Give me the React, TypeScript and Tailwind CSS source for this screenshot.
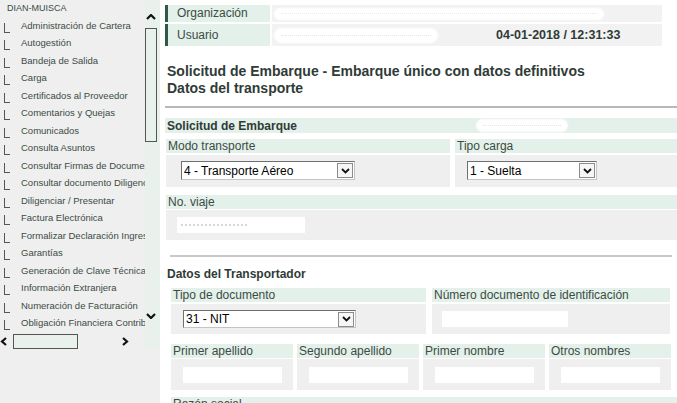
import { ReactNode } from "react";

const menu = [
  "Administración de Cartera",
  "Autogestión",
  "Bandeja de Salida",
  "Carga",
  "Certificados al Proveedor",
  "Comentarios y Quejas",
  "Comunicados",
  "Consulta Asuntos",
  "Consultar Firmas de Documentos",
  "Consultar documento Diligenciado",
  "Diligenciar / Presentar",
  "Factura Electrónica",
  "Formalizar Declaración Ingreso",
  "Garantías",
  "Generación de Clave Técnica",
  "Información Extranjera",
  "Numeración de Facturación",
  "Obligación Financiera Contribuyente",
];

function Caret({ down = false }: { down?: boolean }) {
  return (
    <svg width="10" height="6" viewBox="0 0 10 6">
      <polyline
        points={down ? "1,1 5,5 9,1" : "1,5 5,1 9,5"}
        fill="none"
        stroke="#111"
        strokeWidth="2.2"
      />
    </svg>
  );
}

function Side({ right = false }: { right?: boolean }) {
  return (
    <svg width="7" height="9" viewBox="0 0 7 9">
      <polyline
        points={right ? "1,1 5,4.5 1,8" : "6,1 2,4.5 6,8"}
        fill="none"
        stroke="#111"
        strokeWidth="2.2"
      />
    </svg>
  );
}

// blurred (hidden) value
function Blob({ className }: { className: string }) {
  return (
    <span
      className={`flex items-center rounded-full bg-white px-[6px] shadow-[0_0_2px_1px_#fff] ${className}`}
    >
      <span className="h-0 w-full border-t border-dotted border-[#e6e6e6]" />
    </span>
  );
}

function Select({ value, className }: { value: string; className: string }) {
  return (
    <div
      className={`flex items-center border border-t-[#6f6f6f] border-l-[#6f6f6f] border-r-[#c4c4c4] border-b-[#c4c4c4] bg-white ${className}`}
    >
      <span className="flex-1 pl-[2px] text-[12px] leading-none text-black">
        {value}
      </span>
      <span className="mr-[1px] flex h-[15px] w-[16px] items-center justify-center border border-[#8c8c8c] bg-[#f6f6f6]">
        <svg width="9" height="6" viewBox="0 0 9 6">
          <polyline
            points="1,1 4.5,4.5 8,1"
            fill="none"
            stroke="#111"
            strokeWidth="1.8"
          />
        </svg>
      </span>
    </div>
  );
}

function Field({
  label,
  className,
  bodyClass,
  children,
}: {
  label: string;
  className?: string;
  bodyClass: string;
  children?: ReactNode;
}) {
  return (
    <div className={`flex flex-col ${className ?? ""}`}>
      <div className="h-[14px] bg-[#e4f0ea] pl-[2px] text-[12px] leading-[14px] whitespace-nowrap text-[#3c4b44]">
        {label}
      </div>
      <div className={`bg-[#efefef] ${bodyClass}`}>{children}</div>
    </div>
  );
}

export default function App() {
  return (
    <div className="flex h-[403px] w-[677px] overflow-hidden bg-white font-['Liberation_Sans',Arial,sans-serif]">
      <aside className="flex w-[160px] shrink-0 flex-col bg-[#efefef]">
        <div className="flex h-[349px]">
          <div className="flex w-[145px] flex-col">
            <div className="h-[333px] overflow-hidden">
              <div className="flex h-[17px] items-center pl-[7px] text-[9px] text-[#3c4b44]">
                DIAN-MUISCA
              </div>
              {menu.map((item) => (
                <div key={item} className="flex h-[17.5px] items-center">
                  <span className="ml-[4px] mt-[4px] h-[10px] w-[6px] shrink-0 border-b border-l border-[#555]" />
                  <span className="ml-[11px] whitespace-nowrap text-[9.5px] text-[#3c4b44]">
                    {item}
                  </span>
                </div>
              ))}
            </div>
            <div className="flex h-[16px] items-center">
              <span className="flex w-[7px] justify-center">
                <Side />
              </span>
              <span className="ml-[6px] h-[15px] w-[65px] border border-[#555] bg-[#e9f1ed]" />
              <span className="ml-[44px] flex">
                <Side right />
              </span>
            </div>
          </div>
          <div className="flex w-[15px] flex-col bg-[#e9f1ed]">
            <div className="flex w-[12px] flex-col items-center pt-[14px]">
              <Caret />
              <span className="mt-[8px] h-[114px] w-[12px] border border-[#555]" />
              <span className="mt-[171px] flex">
                <Caret down />
              </span>
            </div>
          </div>
        </div>
      </aside>

      <main className="flex w-[517px] shrink-0 flex-col self-start pl-[5px] pt-[5px] text-[#3c4b44]">
        <div className="flex h-[17px] gap-[2px]">
          <div className="w-[105px] border-l-[3px] border-[#2e5b48] bg-[#e4f0ea] pl-[9px] text-[12px] leading-[17px]">
            Organización
          </div>
          <div className="flex w-[390px] items-center bg-[#f2f2f2] pl-[3px]">
            <Blob className="h-[10px] w-[328px]" />
          </div>
        </div>
        <div className="mt-[2px] flex h-[22px] gap-[2px]">
          <div className="w-[105px] border-l-[3px] border-[#2e5b48] bg-[#e4f0ea] pl-[9px] text-[12px] leading-[22px]">
            Usuario
          </div>
          <div className="flex w-[390px] items-center bg-[#f2f2f2] pl-[3px]">
            <Blob className="h-[13px] w-[162px]" />
            <span className="ml-[59px] text-[12.5px] font-bold text-[#2f3b36]">
              04-01-2018 / 12:31:33
            </span>
          </div>
        </div>

        <h1 className="mt-[17px] pl-[2px] text-[14px] leading-[17px] font-bold text-[#2f3b36]">
          Solicitud de Embarque - Embarque único con datos definitivos
          <br />
          Datos del transporte
        </h1>
        <div className="mt-[9px] h-[2px] bg-[#b8b8b8]" />

        <div className="mt-[10px] flex h-[15px] items-center bg-[#e4f0ea]">
          <span className="w-[312px] shrink-0 pl-[2px] text-[12px] font-bold text-[#2f3b36]">
            Solicitud de Embarque
          </span>
          <Blob className="h-[11px] w-[90px]" />
        </div>

        <div className="mt-[6px] flex gap-[5px] pl-[1px]">
          <Field
            label="Modo transporte"
            className="w-[284px] gap-[2px]"
            bodyClass="h-[32px] pl-[15px] pt-[6px]"
          >
            <Select value="4 - Transporte Aéreo" className="h-[19px] w-[174px]" />
          </Field>
          <Field
            label="Tipo carga"
            className="flex-1 gap-[2px]"
            bodyClass="h-[32px] pl-[12px] pt-[6px]"
          >
            <Select value="1 - Suelta" className="h-[19px] w-[130px]" />
          </Field>
        </div>

        <Field
          label="No. viaje"
          className="mt-[8px] gap-[1px] pl-[1px]"
          bodyClass="h-[30px] pl-[11px] pt-[7px]"
        >
          <div className="flex h-[16px] w-[128px] items-center bg-white pl-[4px]">
            <span className="h-0 w-[66px] border-t-2 border-dotted border-[#d6d6d6]" />
          </div>
        </Field>

        <div className="mx-[5px] mt-[15px] h-[2px] bg-[#c8c8c8]" />

        <div className="mt-[10px] h-[15px] pl-[2px] text-[12px] leading-[15px] font-bold text-[#2f3b36]">
          Datos del Transportador
        </div>

        <div className="flex flex-col pl-[6px]">
          <div className="mt-[6px] flex gap-[6px]">
            <Field
              label="Tipo de documento"
              className="w-[255px] gap-[2px]"
              bodyClass="h-[30px] pl-[12px] pt-[6px]"
            >
              <Select value="31 - NIT" className="h-[18px] w-[173px]" />
            </Field>
            <Field
              label="Número documento de identificación"
              className="w-[238px] gap-[2px]"
              bodyClass="h-[30px] pl-[10px] pt-[7px]"
            >
              <div className="h-[16px] w-[126px] bg-white" />
            </Field>
          </div>

          <div className="mt-[10px] grid w-[500px] grid-cols-4 gap-x-[4px]">
            {["Primer apellido", "Segundo apellido", "Primer nombre", "Otros nombres"].map(
              (label) => (
                <Field
                  key={label}
                  label={label}
                  className="gap-[1px]"
                  bodyClass="h-[31px] pl-[12px] pt-[8px]"
                >
                  <div className="h-[16px] w-[99px] bg-white" />
                </Field>
              ),
            )}
          </div>

          <div className="mt-[7px] h-[14px] bg-[#e4f0ea] pl-[2px] text-[12px] leading-[14px] text-[#3c4b44]">
            Razón social
          </div>
        </div>
      </main>
    </div>
  );
}
